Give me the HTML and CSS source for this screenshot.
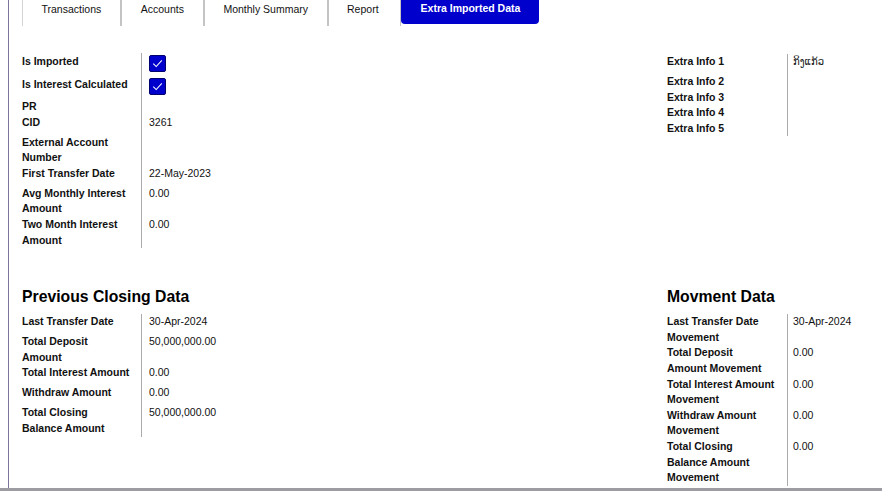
FILE: index.html
```html
<!DOCTYPE html>
<html lang="en">
<head>
<meta charset="utf-8">
<title>Extra Imported Data</title>
<link rel="stylesheet" href="styles.css">
</head>
<body>
<div class="page">
  <div class="frame">
    <nav class="tabs">
      <div class="tab first">Transactions</div>
      <div class="tab wide">Accounts</div>
      <div class="tab">Monthly Summary</div>
      <div class="tab thin">Report</div>
      <div class="tab active">Extra Imported Data</div>
    </nav>

    <div class="sections">
      <div class="fields">
        <div class="row check-row">
          <div class="label">Is Imported</div>
          <div class="value"><span class="checkbox"><svg viewBox="0 0 16 16" width="16" height="16"><path d="M3.5 8.2 L6.6 11.2 L12.6 4.6" fill="none" stroke="#fff" stroke-width="1.1"/></svg></span></div>
        </div>
        <div class="row check-row">
          <div class="label">Is Interest Calculated</div>
          <div class="value"><span class="checkbox"><svg viewBox="0 0 16 16" width="16" height="16"><path d="M3.5 8.2 L6.6 11.2 L12.6 4.6" fill="none" stroke="#fff" stroke-width="1.1"/></svg></span></div>
        </div>
        <div class="row"><div class="label">PR</div><div class="value"></div></div>
        <div class="row"><div class="label">CID</div><div class="value">3261</div></div>
        <div class="row"><div class="label">External Account<br>Number</div><div class="value"></div></div>
        <div class="row"><div class="label">First Transfer Date</div><div class="value">22-May-2023</div></div>
        <div class="row"><div class="label">Avg Monthly Interest<br>Amount</div><div class="value">0.00</div></div>
        <div class="row"><div class="label">Two Month Interest<br>Amount</div><div class="value">0.00</div></div>
      </div>

      <div class="fields right extra">
        <div class="row"><div class="label">Extra Info 1</div><div class="value lao">ກິງແກ້ວ</div></div>
        <div class="row"><div class="label">Extra Info 2</div><div class="value"></div></div>
        <div class="row"><div class="label">Extra Info 3</div><div class="value"></div></div>
        <div class="row"><div class="label">Extra Info 4</div><div class="value"></div></div>
        <div class="row"><div class="label">Extra Info 5</div><div class="value"></div></div>
      </div>

      <div class="group">
        <h2 class="heading">Previous Closing Data</h2>
        <div class="fields">
          <div class="row"><div class="label">Last Transfer Date</div><div class="value">30-Apr-2024</div></div>
          <div class="row"><div class="label">Total Deposit<br>Amount</div><div class="value">50,000,000.00</div></div>
          <div class="row"><div class="label">Total Interest Amount</div><div class="value">0.00</div></div>
          <div class="row"><div class="label">Withdraw Amount</div><div class="value">0.00</div></div>
          <div class="row"><div class="label">Total Closing<br>Balance Amount</div><div class="value">50,000,000.00</div></div>
        </div>
      </div>

      <div class="group">
        <h2 class="heading">Movment Data</h2>
        <div class="fields right">
          <div class="row"><div class="label">Last Transfer Date<br>Movement</div><div class="value">30-Apr-2024</div></div>
          <div class="row"><div class="label">Total Deposit<br>Amount Movement</div><div class="value">0.00</div></div>
          <div class="row"><div class="label">Total Interest Amount<br>Movement</div><div class="value">0.00</div></div>
          <div class="row"><div class="label">Withdraw Amount<br>Movement</div><div class="value">0.00</div></div>
          <div class="row"><div class="label">Total Closing<br>Balance Amount<br>Movement</div><div class="value">0.00</div></div>
        </div>
      </div>
    </div>
  </div>
  <div class="bottom-bar"></div>
</div>
</body>
</html>
```

FILE: styles.css
```css
html, body {
  margin: 0;
  padding: 0;
  background: #fff;
}

body {
  font-family: "Liberation Sans", Arial, "DejaVu Sans", sans-serif;
  font-size: 10.5px;
  color: #111;
}

.page {
  height: 491px;
  display: flex;
  flex-direction: column;
  overflow: hidden;
}

.frame {
  flex: 1;
  margin-left: 8px;
  border-left: 1px solid #7d7599;
  padding-left: 13px;
  overflow: hidden;
}

.bottom-bar {
  height: 3px;
  background: #9c9ca2;
}

/* Tabs */
.tabs {
  display: flex;
  height: 26px;
  align-items: flex-start;
}

.tab {
  height: 26px;
  box-sizing: border-box;
  padding: 3px 18.5px 0;
  line-height: 12px;
  border-right: 2px solid #c4c4c4;
  color: #111;
  white-space: nowrap;
}

.tab.first {
  border-left: 1px solid #d4d4d4;
}

.tab.wide {
  padding: 3px 19px 0;
}

.tab.thin {
  padding-right: 21px;
  border-right: 1px solid #c4c4c4;
}

.tab.active {
  height: 24px;
  padding: 2px 19px 0 20px;
  background: #0000cc;
  color: #fff;
  font-weight: bold;
  border-right: none;
  border-radius: 0 0 4px 4px;
}

/* Layout */
.sections {
  margin-top: 27px;
  display: grid;
  grid-template-columns: 645px auto;
  align-items: start;
}

.extra {
  margin-top: 1px;
}

.group {
  margin-top: 39px;
}

.heading {
  margin: 0 0 7px;
  font-size: 15.75px;
  line-height: 20px;
  font-weight: bold;
  color: #000;
}

/* Field rows */
.row {
  display: flex;
  align-items: stretch;
}

.label {
  width: 119px;
  flex: none;
  font-weight: bold;
  line-height: 15.6px;
  white-space: nowrap;
}

.value {
  border-left: 1px solid #ababab;
  padding-left: 7px;
  min-height: 20px;
  line-height: 15.6px;
  white-space: nowrap;
}

.value:empty {
  min-height: 0;
}

.right .label {
  width: 120px;
}

.right .value {
  padding-left: 5px;
}

.lao {
  font-family: "DejaVu Sans", "Noto Sans", sans-serif;
  font-size: 10px;
}

.check-row {
  height: 23px;
}

.check-row .label {
  padding-top: 1px;
}

.checkbox {
  display: block;
  margin-top: 2px;
  width: 17px;
  height: 17px;
  box-sizing: border-box;
  background: #0000cc;
  border: 1px solid #00006e;
  border-radius: 2px;
}

.checkbox svg {
  display: block;
  width: 15px;
  height: 15px;
}
```
